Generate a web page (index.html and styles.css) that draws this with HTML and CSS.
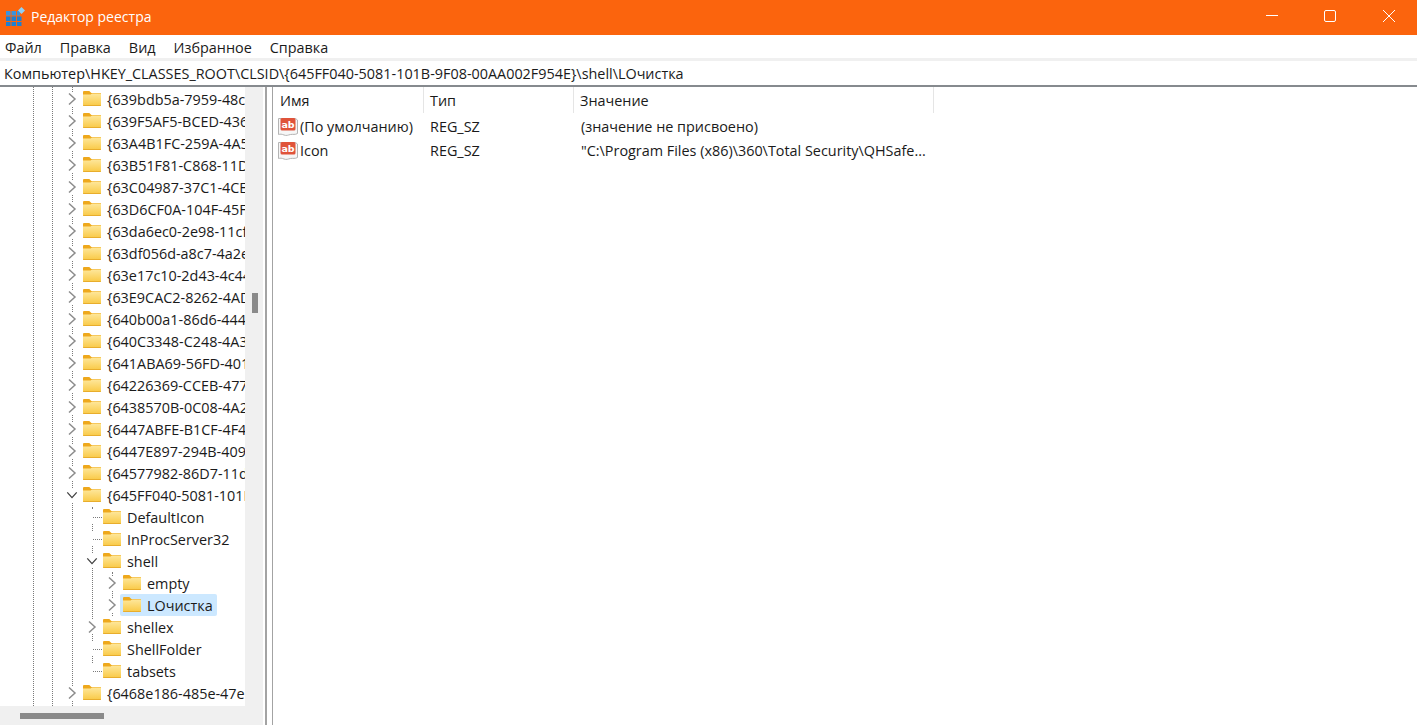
FILE: index.html
```html
<!DOCTYPE html>
<html lang="ru">
<head>
<meta charset="utf-8">
<title>Редактор реестра</title>
<link rel="stylesheet" href="styles.css">
</head>
<body>
<svg class="defs" width="0" height="0" aria-hidden="true">
  <defs>
    <linearGradient id="fg" x1="0" y1="0" x2="0" y2="1">
      <stop offset="0" stop-color="#fee79b"/>
      <stop offset="1" stop-color="#f9c945"/>
    </linearGradient>
    <symbol id="folder" viewBox="0 0 18 15">
      <path d="M0 1.2C0 .5.5 0 1.2 0h4.600c.4 0 .7.1 1 .4L8.400 2H18v3H0z" fill="#eea81c"/>
      <path d="M0 3.500h7.600L9 2.600H18V14c0 .6-.4 1-1 1H1c-.6 0-1-.4-1-1z" fill="url(#fg)"/>
      <path d="M0 14h18v.2c0 .5-.4.8-.9.8H.9c-.5 0-.9-.3-.9-.8z" fill="#e8ad2c"/>
    </symbol>
    <symbol id="chev-r" viewBox="0 0 10 14"><path d="M2 1.500 8 7l-6 5.500" fill="none" stroke="#8c8c8c" stroke-width="1.500"/></symbol>
    <symbol id="chev-d" viewBox="0 0 14 10"><path d="M1.500 2 7 8l5.500-6" fill="none" stroke="#404040" stroke-width="1.500"/></symbol>
    <symbol id="abicon" viewBox="0 0 20 19">
      <path d="M.5 1.500h17l2 1.500v13.500c-2.500 1.500-4.500.5-7 1s-4 1.500-6.500.5-3.500-1-5.500-.5z" fill="#f6f6f6" stroke="#b4b4b4"/>
      <rect x="2.500" y="1" width="15" height="12.500" rx="1.500" fill="#e0533a"/>
      <text x="10" y="11" class="abtext">ab</text>
    </symbol>
  </defs>
</svg>

<div class="window">
  <header class="titlebar">
    <svg class="appicon" viewBox="0 0 19 19" width="19" height="19" aria-hidden="true">
      <g fill="#1f7fd1">
        <rect x="0" y="4" width="4.500" height="4.500" fill="#3a93dd"/><rect x="5.500" y="4" width="4.500" height="4.500" fill="#3a93dd"/><rect x="11" y="4" width="3" height="4.500" fill="#3a93dd"/>
        <rect x="0" y="9.500" width="4.500" height="4.500"/><rect x="5.500" y="9.500" width="4.500" height="4.500"/><rect x="11" y="9.500" width="4.500" height="4.500"/>
        <rect x="0" y="15" width="4.500" height="4"/><rect x="5.500" y="15" width="4.500" height="4"/><rect x="11" y="15" width="4.500" height="4"/>
      </g>
      <path d="M15.500 0 19 3.500 15.500 7 12 3.500z" fill="#8fd0f5"/>
    </svg>
    <span class="apptitle">Редактор реестра</span>
    <div class="winbtns">
      <svg class="winbtn" viewBox="0 0 58 35" aria-hidden="true"><path d="M23 15.500h12" stroke="#fff" fill="none"/></svg>
      <svg class="winbtn" viewBox="0 0 58 35" aria-hidden="true"><rect x="23.500" y="10.500" width="11" height="11" rx="1.500" stroke="#fff" fill="none"/></svg>
      <svg class="winbtn" viewBox="0 0 58 35" aria-hidden="true"><path d="M24 10l12 12M36 10 24 22" stroke="#fff" fill="none"/></svg>
    </div>
  </header>

  <nav class="menubar">
    <span class="menuitem">Файл</span>
    <span class="menuitem">Правка</span>
    <span class="menuitem">Вид</span>
    <span class="menuitem">Избранное</span>
    <span class="menuitem">Справка</span>
  </nav>

  <div class="addressbar">Компьютер\HKEY_CLASSES_ROOT\CLSID\{645FF040-5081-101B-9F08-00AA002F954E}\shell\LОчистка</div>

  <main class="panes">
    <section class="treepane">
      <div class="treewrap">
        <div class="tree">
          <i class="guide g1"></i><i class="guide g2"></i><i class="guide g3"></i><i class="guide g4"></i><i class="guide g5"></i>

          <div class="row l0"><svg class="chev"><use href="#chev-r"/></svg><svg class="folder"><use href="#folder"/></svg><span class="label">{639bdb5a-7959-48c1-9b2a</span></div>
          <div class="row l0"><svg class="chev"><use href="#chev-r"/></svg><svg class="folder"><use href="#folder"/></svg><span class="label">{639F5AF5-BCED-4360-9A1B</span></div>
          <div class="row l0"><svg class="chev"><use href="#chev-r"/></svg><svg class="folder"><use href="#folder"/></svg><span class="label">{63A4B1FC-259A-4A5B-8129</span></div>
          <div class="row l0"><svg class="chev"><use href="#chev-r"/></svg><svg class="folder"><use href="#folder"/></svg><span class="label">{63B51F81-C868-11D0-999C</span></div>
          <div class="row l0"><svg class="chev"><use href="#chev-r"/></svg><svg class="folder"><use href="#folder"/></svg><span class="label">{63C04987-37C1-4CE1-8F12</span></div>
          <div class="row l0"><svg class="chev"><use href="#chev-r"/></svg><svg class="folder"><use href="#folder"/></svg><span class="label">{63D6CF0A-104F-45F1-B2C3</span></div>
          <div class="row l0"><svg class="chev"><use href="#chev-r"/></svg><svg class="folder"><use href="#folder"/></svg><span class="label">{63da6ec0-2e98-11cf-8d82</span></div>
          <div class="row l0"><svg class="chev"><use href="#chev-r"/></svg><svg class="folder"><use href="#folder"/></svg><span class="label">{63df056d-a8c7-4a2e-9b1f</span></div>
          <div class="row l0"><svg class="chev"><use href="#chev-r"/></svg><svg class="folder"><use href="#folder"/></svg><span class="label">{63e17c10-2d43-4c44-8f1a</span></div>
          <div class="row l0"><svg class="chev"><use href="#chev-r"/></svg><svg class="folder"><use href="#folder"/></svg><span class="label">{63E9CAC2-8262-4AD0-91B3</span></div>
          <div class="row l0"><svg class="chev"><use href="#chev-r"/></svg><svg class="folder"><use href="#folder"/></svg><span class="label">{640b00a1-86d6-4444-a1b2</span></div>
          <div class="row l0"><svg class="chev"><use href="#chev-r"/></svg><svg class="folder"><use href="#folder"/></svg><span class="label">{640C3348-C248-4A3F-8E2D</span></div>
          <div class="row l0"><svg class="chev"><use href="#chev-r"/></svg><svg class="folder"><use href="#folder"/></svg><span class="label">{641ABA69-56FD-4017-B1C2</span></div>
          <div class="row l0"><svg class="chev"><use href="#chev-r"/></svg><svg class="folder"><use href="#folder"/></svg><span class="label">{64226369-CCEB-4775-9A1E</span></div>
          <div class="row l0"><svg class="chev"><use href="#chev-r"/></svg><svg class="folder"><use href="#folder"/></svg><span class="label">{6438570B-0C08-4A25-B1D3</span></div>
          <div class="row l0"><svg class="chev"><use href="#chev-r"/></svg><svg class="folder"><use href="#folder"/></svg><span class="label">{6447ABFE-B1CF-4F46-A2E1</span></div>
          <div class="row l0"><svg class="chev"><use href="#chev-r"/></svg><svg class="folder"><use href="#folder"/></svg><span class="label">{6447E897-294B-4097-8C1D</span></div>
          <div class="row l0"><svg class="chev"><use href="#chev-r"/></svg><svg class="folder"><use href="#folder"/></svg><span class="label">{64577982-86D7-11d1-BDE9</span></div>
          <div class="row l0"><svg class="chev"><use href="#chev-d"/></svg><svg class="folder"><use href="#folder"/></svg><span class="label">{645FF040-5081-101B-9F08</span></div>
          <div class="row l1 stub"><span class="chev"></span><svg class="folder"><use href="#folder"/></svg><span class="label">DefaultIcon</span></div>
          <div class="row l1 stub"><span class="chev"></span><svg class="folder"><use href="#folder"/></svg><span class="label">InProcServer32</span></div>
          <div class="row l1"><svg class="chev"><use href="#chev-d"/></svg><svg class="folder"><use href="#folder"/></svg><span class="label">shell</span></div>
          <div class="row l2"><svg class="chev"><use href="#chev-r"/></svg><svg class="folder"><use href="#folder"/></svg><span class="label">empty</span></div>
          <div class="row l2"><svg class="chev"><use href="#chev-r"/></svg><span class="selected"><svg class="folder"><use href="#folder"/></svg><span class="label">LОчистка</span></span></div>
          <div class="row l1"><svg class="chev"><use href="#chev-r"/></svg><svg class="folder"><use href="#folder"/></svg><span class="label">shellex</span></div>
          <div class="row l1 stub"><span class="chev"></span><svg class="folder"><use href="#folder"/></svg><span class="label">ShellFolder</span></div>
          <div class="row l1 stub"><span class="chev"></span><svg class="folder"><use href="#folder"/></svg><span class="label">tabsets</span></div>
          <div class="row l0"><svg class="chev"><use href="#chev-r"/></svg><svg class="folder"><use href="#folder"/></svg><span class="label">{6468e186-485e-47e2-a1b2</span></div>
        </div>
        <div class="vscroll"><div class="vthumb"></div></div>
      </div>
      <div class="hscroll"><div class="hthumb"></div></div>
    </section>

    <div class="splitter"></div>

    <section class="listpane">
      <div class="listhead">
        <div class="col c1">Имя</div>
        <div class="col c2">Тип</div>
        <div class="col c3">Значение</div>
      </div>
      <div class="listrow">
        <div class="cell c1 namecell"><svg class="ab"><use href="#abicon"/></svg>(По умолчанию)</div>
        <div class="cell c2">REG_SZ</div>
        <div class="cell c3">(значение не присвоено)</div>
      </div>
      <div class="listrow">
        <div class="cell c1 namecell"><svg class="ab"><use href="#abicon"/></svg>Icon</div>
        <div class="cell c2">REG_SZ</div>
        <div class="cell c3">"C:\Program Files (x86)\360\Total Security\QHSafe...</div>
      </div>
    </section>
  </main>
</div>
</body>
</html>
```

FILE: styles.css
```css
* { box-sizing: border-box; }
html, body { margin: 0; height: 100%; overflow: hidden; background: #fff; }
body { font-family: "Open Sans", "Noto Sans", sans-serif; font-size: 14.4px; color: #1a1a1a; }
.defs { position: absolute; }
.abtext { font: 700 9.5px "DejaVu Sans", sans-serif; fill: #fff; text-anchor: middle; }

.window { display: flex; flex-direction: column; height: 725px; }

.titlebar { height: 35px; flex: none; background: #fb640d; display: flex; align-items: center; padding-left: 6px; color: #fff; }
.appicon { flex: none; margin-bottom: 2px; }
.apptitle { margin-left: 6px; margin-bottom: 2px; font-size: 14px; }
.winbtns { margin-left: auto; display: flex; }
.winbtn { width: 58px; height: 35px; display: block; }

.menubar { height: 23px; flex: none; display: flex; gap: 18px; align-items: center; padding: 1px 0 0 5px; }
.menuitem { white-space: nowrap; }

.addressbar { height: 27px; flex: none; border-top: 3px solid #f0f0f0; padding-left: 4px; line-height: 25px; white-space: nowrap; }

.panes { flex: 1; min-height: 0; display: flex; border-top: 2px solid #868a8e; }

.treepane { width: 263px; flex: none; display: flex; flex-direction: column; background: #f0f0f0; }
.treewrap { flex: 1; min-height: 0; display: flex; }
.tree { position: relative; width: 245px; flex: none; background: #fff; overflow: hidden; padding-top: 1px; }
.vscroll { flex: 1; position: relative; }
.vthumb { position: absolute; left: 7px; top: 206px; width: 6px; height: 20px; background: #8a8a8a; }
.hscroll { height: 19px; flex: none; position: relative; }
.hthumb { position: absolute; left: 20px; top: 7px; width: 84px; height: 6px; background: #8a8a8a; }

.guide { position: absolute; border-left: 1px dotted #7a7a7a; width: 0; }
.g1 { left: 33px; top: 0; bottom: 0; }
.g2 { left: 52px; top: 0; bottom: 0; }
.g3 { left: 72px; top: 0; bottom: 0; }
.g4 { left: 92px; top: 420px; height: 166px; }
.g5 { left: 112px; top: 485px; height: 44px; }

.row { position: relative; height: 22px; display: flex; align-items: center; white-space: nowrap; }
.l0 { padding-left: 66px; }
.l1 { padding-left: 86px; }
.l2 { padding-left: 106px; }
.stub::before { content: ""; position: absolute; left: 93px; top: 11px; width: 9px; border-top: 1px dotted #7a7a7a; }
.chev { width: 12px; height: 14px; flex: none; background: #fff; }
.folder { width: 18px; height: 15px; flex: none; margin-left: 5px; margin-top: -2px; background: #fff; box-sizing: content-box; }
.label { margin-left: 6px; }
.selected { display: flex; align-items: center; height: 22px; margin-left: 2px; background: #cce8ff; border-radius: 2px; padding-right: 4px; }
.selected .folder { margin-left: 3px; background: transparent; }

.splitter { width: 8px; flex: none; border-left: 2px solid #a3a3a3; border-right: 1px solid #a3a3a3; margin-left: 2px; }

.listpane { flex: 1; min-width: 0; }
.listhead { display: flex; height: 27px; }
.col { height: 26px; line-height: 28px; padding-left: 7px; border-right: 1px solid #e5e5e5; }
.col.c2, .col.c3, .cell.c2 { padding-left: 6px; }
.c1 { width: 151px; flex: none; }
.c2 { width: 150px; flex: none; }
.c3 { width: 360px; flex: none; }
.listrow { display: flex; height: 24px; align-items: center; }
.cell { padding-left: 7px; white-space: nowrap; overflow: hidden; }
.namecell { display: flex; align-items: center; padding-left: 5px; }
.ab { width: 20px; height: 19px; flex: none; margin-right: 2px; }
```
